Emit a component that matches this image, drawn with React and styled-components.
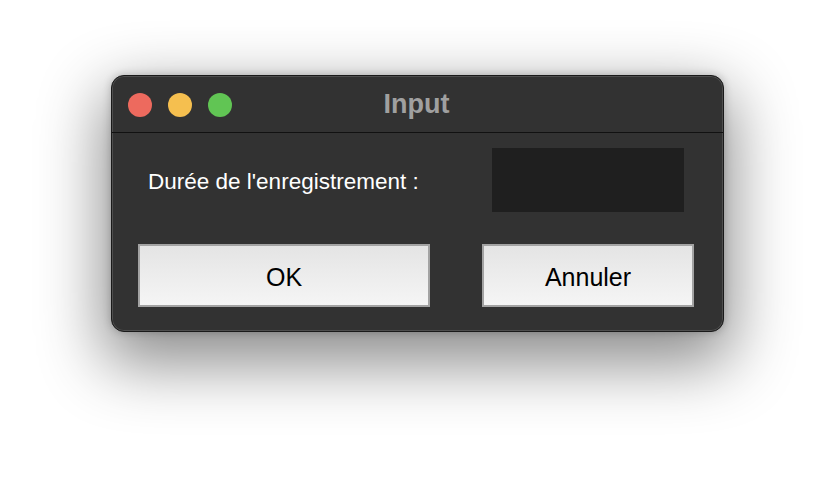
import React from 'react'
import styled, { createGlobalStyle } from 'styled-components'

const GlobalStyle = createGlobalStyle`
  html, body {
    margin: 0;
    padding: 0;
    background: #ffffff;
  }
  body {
    font-family: "Liberation Sans", Arial, sans-serif;
  }
`;

const Page = styled.div`
  width: 836px;
  height: 480px;
  display: flex;
  justify-content: flex-start;
  align-items: flex-start;
  padding: 75px 0 0 111px;
  box-sizing: border-box;
`;

const Window = styled.div`
  width: 613px;
  height: 257px;
  box-sizing: border-box;
  background: #323232;
  border: 1px solid #1a1a1a;
  border-radius: 13px;
  box-shadow: inset 0 0 0 1px #4e4e4e, 0 24px 64px 8px rgba(0, 0, 0, 0.45),
    0 0 8px rgba(0, 0, 0, 0.22);
  display: flex;
  flex-direction: column;
  overflow: hidden;
`;

const TitleBar = styled.div`
  height: 56px;
  flex-shrink: 0;
  display: flex;
  align-items: center;
  padding-left: 16px;
  border-bottom: 1px solid #111111;
`;

const Lights = styled.div`
  display: flex;
  gap: 16px;
  margin-top: 2px;
`;

const Light = styled.span`
  width: 24px;
  height: 24px;
  border-radius: 50%;
  background: ${p => p.$color};
`;

const Title = styled.div`
  flex: 1;
  text-align: center;
  margin-right: 122px;
  margin-top: 1px;
  font-size: 27px;
  font-weight: bold;
  color: #a0a0a0;
`;

const Body = styled.div`
  display: flex;
  flex-direction: column;
`;

const FieldRow = styled.div`
  display: flex;
  align-items: center;
  justify-content: space-between;
  padding: 15px 39px 0 36px;
`;

const Label = styled.label`
  font-size: 22.5px;
  color: #ffffff;
  margin-top: 3px;
`;

const Field = styled.div`
  width: 192px;
  height: 64px;
  background: #1f1f1f;
`;

const ButtonRow = styled.div`
  display: flex;
  justify-content: space-between;
  padding: 32px 29px 0 26px;
`;

const Button = styled.button`
  width: ${p => p.$width}px;
  height: 63px;
  box-sizing: border-box;
  border: 2px solid #a3a3a3;
  border-radius: 0;
  background: linear-gradient(#e4e4e4, #f5f5f5);
  color: #000000;
  font-family: "Liberation Sans", Arial, sans-serif;
  font-size: 25px;
  padding: 0;
  padding-top: 4px;
`;

export default function App() {
  return (
    <>
      <GlobalStyle />
      <Page>
        <Window>
          <TitleBar>
            <Lights>
              <Light $color="#ed6a5e" />
              <Light $color="#f5bf4f" />
              <Light $color="#61c554" />
            </Lights>
            <Title>Input</Title>
          </TitleBar>
          <Body>
            <FieldRow>
              <Label>Durée de l'enregistrement :</Label>
              <Field />
            </FieldRow>
            <ButtonRow>
              <Button $width={292}>OK</Button>
              <Button $width={212}>Annuler</Button>
            </ButtonRow>
          </Body>
        </Window>
      </Page>
    </>
  )
}
